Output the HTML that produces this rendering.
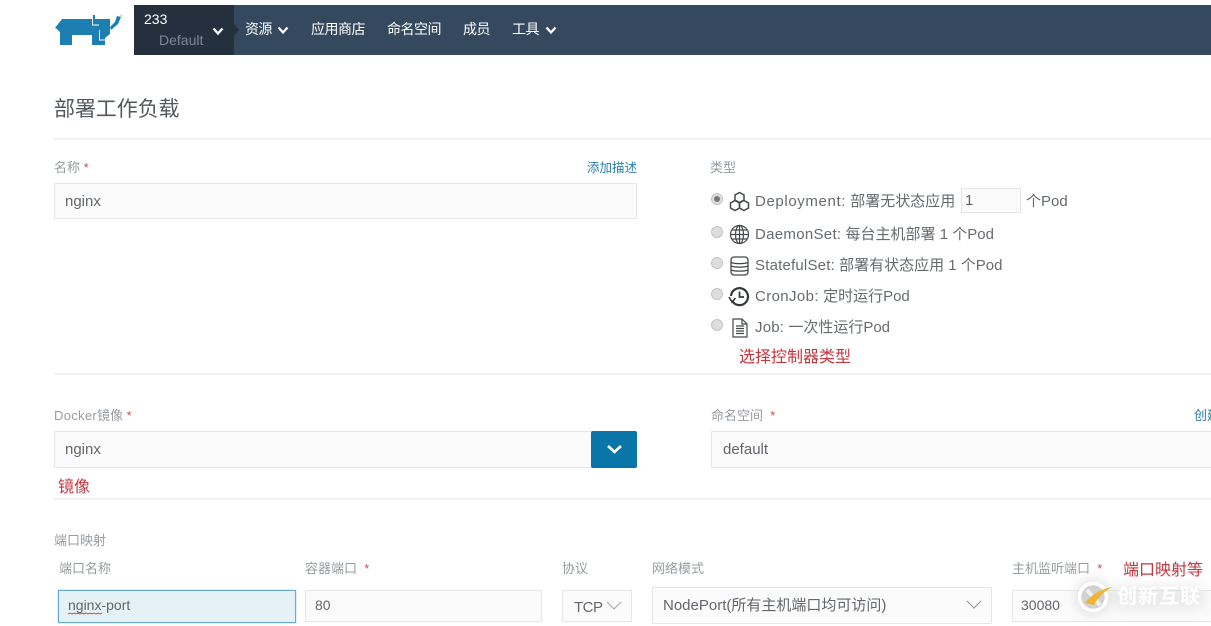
<!DOCTYPE html>
<html lang="zh"><head><meta charset="utf-8"><title>部署工作负载</title>
<style>
html,body{margin:0;padding:0;background:#fff}
body{position:relative;width:1211px;height:626px;overflow:hidden;font-family:"Liberation Sans","Noto Sans CJK SC",sans-serif;color:#555a60}
.a{position:absolute;white-space:nowrap}
.bar{position:absolute;background:#f1f1f1;height:2px}
.l{position:absolute;white-space:nowrap;font-size:13px;line-height:16px;color:#979ca1}
.l i{font-style:normal;color:#c0525c}
.inp{position:absolute;box-sizing:border-box;background:#fbfbfb;border:1px solid #e4e6e8;font-size:15px;color:#62666b;padding-left:10px;white-space:nowrap}
.nav{position:absolute;top:21px;font-size:14px;line-height:17px;color:#fff;white-space:nowrap}
.t{position:absolute;font-size:15px;line-height:18px;color:#676b70;white-space:nowrap}
.t b{font-weight:normal}
.r{position:absolute;left:711px;width:12px;height:12px;border-radius:50%;background:#dedede;border:1px solid #c4c4c4;box-sizing:border-box}
.red{position:absolute;font-size:16px;line-height:20px;color:#c2363e;white-space:nowrap}
svg{position:absolute;overflow:visible}
</style></head><body>

<div class="a" style="left:134px;top:5px;width:100px;height:50px;background:#24303e"></div>
<div class="a" style="left:234px;top:5px;width:977px;height:50px;background:#35495e"></div>
<svg style="left:234px;top:24px" width="6" height="12"><path d="M0 0L5 6L0 12Z" fill="#24303e"/></svg>

<svg style="left:54px;top:14px" width="68" height="34" viewBox="0 0 68 34">
<path d="M1 14L8 5H38V1H41V5H56V20L51 24V31H38V21H18V31H6V18L3 15Z" fill="#1d7fb1"/>
<path d="M56 13L61 8L63 2L67 3L64 10L57 16Z" fill="#1d7fb1"/>
<path d="M38.500 1V11H45M45.500 16V26H51" fill="none" stroke="#fff" stroke-width=".9"/>
<circle cx="67" cy="2" r="1.100" fill="none" stroke="#9cc" stroke-width=".6"/>
</svg>

<div class="a" style="left:144px;top:11px;font-size:14px;line-height:17px;color:#fff">233</div>
<div class="a" style="left:159px;top:32px;font-size:14px;line-height:17px;color:#7e8791">Default</div>
<svg style="left:212px;top:27px" width="12" height="9"><path d="M1.500 1.500L6 6.500L10.500 1.500" fill="none" stroke="#fff" stroke-width="2.400"/></svg>

<div class="nav" style="left:245px;letter-spacing:-.6px">资源</div>
<svg style="left:277px;top:26px" width="12" height="9"><path d="M1.500 1.500L6 6.500L10.500 1.500" fill="none" stroke="#fff" stroke-width="2.200"/></svg>
<div class="nav" style="left:311px;letter-spacing:-.5px">应用商店</div>
<div class="nav" style="left:387px;letter-spacing:-.5px">命名空间</div>
<div class="nav" style="left:463px;letter-spacing:-.5px">成员</div>
<div class="nav" style="left:512px;letter-spacing:-.5px">工具</div>
<svg style="left:545px;top:26px" width="12" height="9"><path d="M1.500 1.500L6 6.500L10.500 1.500" fill="none" stroke="#fff" stroke-width="2.200"/></svg>

<div class="a" style="left:54px;top:97px;font-size:21px;line-height:26px;letter-spacing:-.1px;color:#53585e">部署工作负载</div>
<div class="bar" style="left:54px;top:138px;width:1157px"></div>

<div class="l" style="left:54px;top:160px">名称 <i>*</i></div>
<div class="l" style="left:587px;top:160px;font-size:12.500px;color:#2d7ea8">添加描述</div>
<div class="inp" style="left:54px;top:183px;width:583px;height:36px;line-height:35px">nginx</div>

<div class="l" style="left:710px;top:160px">类型</div>

<div class="r" style="top:193px"></div>
<div class="a" style="left:714px;top:196px;width:6px;height:6px;border-radius:50%;background:#777"></div>
<svg style="left:729px;top:191px" width="21" height="21" viewBox="0 0 21 21" fill="none" stroke="#45494e" stroke-width="1.500">
<path d="M10.500 1.500L15 4V9L10.500 11.500L6 9V4Z"/><path d="M6 9.500L10.500 12V17L6 19.500L1.500 17V12Z"/><path d="M15 9.500L19.500 12V17L15 19.500L10.500 17V12Z"/></svg>
<div class="t" style="left:755px;top:193px"><b style="letter-spacing:.62px">Deployment:</b> 部署无状态应用</div>
<div class="inp" style="left:961px;top:188px;width:60px;height:25px;line-height:24px;padding-left:3px">1</div>
<div class="t" style="left:1026px;top:193px">个Pod</div>

<div class="r" style="top:226px"></div>
<svg style="left:729px;top:224px" width="21" height="21" viewBox="0 0 21 21" fill="none" stroke="#45494e" stroke-width="1.200">
<circle cx="10.500" cy="10.500" r="9"/><ellipse cx="10.500" cy="10.500" rx="4" ry="9"/><path d="M10.500 1.500V19.500M1.500 10.500H19.500M3 6H18M3 15H18"/></svg>
<div class="t" style="left:755px;top:226px"><b style="letter-spacing:.3px">DaemonSet:</b> 每台主机部署 1 个Pod</div>

<div class="r" style="top:257px"></div>
<svg style="left:730px;top:256px" width="20" height="20" viewBox="0 0 20 20" fill="none" stroke="#45494e" stroke-width="1.300">
<rect x="1" y="1" width="17" height="18" rx="3"/><path d="M1 6.500C5 8 14 8 18 6.500M1 10C5 11.500 14 11.500 18 10M1 14C5 15.500 14 15.500 18 14"/></svg>
<div class="t" style="left:755px;top:257px"><b style="letter-spacing:.2px">StatefulSet:</b> 部署有状态应用 1 个Pod</div>

<div class="r" style="top:288px"></div>
<svg style="left:729px;top:286px" width="21" height="21" viewBox="0 0 21 21" fill="none" stroke="#33373c" stroke-width="2.200">
<path d="M3.500 15.500A8.500 8.500 0 1 0 2 10"/><path d="M0 11L3 16L6.500 12" stroke-width="1.600"/><path d="M10.500 5.500V11H15" stroke-width="1.700"/></svg>
<div class="t" style="left:755px;top:288px"><b style="letter-spacing:.38px">CronJob:</b> 定时运行Pod</div>

<div class="r" style="top:319px"></div>
<svg style="left:732px;top:318px" width="16" height="20" viewBox="0 0 16 20" fill="none" stroke="#45494e" stroke-width="1.200">
<path d="M1 1H10L15 6V19H1Z"/><path d="M10 1V6H15M4 8H12M4 10.500H12M4 13H12M4 15.500H12"/></svg>
<div class="t" style="left:755px;top:319px"><b style="letter-spacing:.2px">Job:</b> 一次性运行Pod</div>

<div class="red" style="left:739px;top:348px">选择控制器类型</div>
<div class="bar" style="left:54px;top:373px;width:1157px"></div>

<div class="l" style="left:54px;top:408px"><span style="letter-spacing:.3px">Docker</span>镜像 <i>*</i></div>
<div class="inp" style="left:54px;top:431px;width:540px;height:37px;line-height:35px">nginx</div>
<div class="a" style="left:591px;top:431px;width:46px;height:37px;background:#0a75a8;border-radius:2px"></div>
<svg style="left:606px;top:444px" width="17" height="11"><path d="M2 2L8.500 8L15 2" fill="none" stroke="#fff" stroke-width="2.600"/></svg>

<div class="l" style="left:711px;top:408px">命名空间 &nbsp;<i>*</i></div>
<div class="l" style="left:1194px;top:408px;color:#2d7ea8">创建</div>
<div class="inp" style="left:711px;top:431px;width:510px;height:37px;line-height:35px;padding-left:11px">default</div>

<div class="red" style="left:58px;top:478px">镜像</div>
<div class="bar" style="left:54px;top:498px;width:1157px"></div>

<div class="l" style="left:54px;top:533px">端口映射</div>
<div class="l" style="left:59px;top:561px">端口名称</div>
<div class="l" style="left:305px;top:561px">容器端口 &nbsp;<i>*</i></div>
<div class="l" style="left:562px;top:561px">协议</div>
<div class="l" style="left:652px;top:561px">网络模式</div>
<div class="l" style="left:1012px;top:561px">主机监听端口 &nbsp;<i>*</i></div>
<div class="red" style="left:1123px;top:561px">端口映射等</div>

<div class="inp" style="left:58px;top:590px;width:238px;height:33px;line-height:29px;background:#e4f1f6;border:1px solid #6aa9cf;box-shadow:0 0 1px #6aa9cf;padding-left:9px;font-size:14px">nginx-port</div>
<svg style="left:68px;top:612px" width="36" height="3"><path d="M0 2L2 1L4 2L6 1L8 2L10 1L12 2L14 1L16 2L18 1L20 2L22 1L24 2L26 1L28 2L30 1L32 2L34 1" fill="none" stroke="#d8343e" stroke-width=".9"/></svg>
<div class="inp" style="left:305px;top:590px;width:237px;height:32px;line-height:29px;padding-left:9px;font-size:14px">80</div>
<div class="inp" style="left:562px;top:590px;width:70px;height:32px;line-height:33px;font-size:15px;padding-left:11px;letter-spacing:-.5px">TCP</div>
<svg style="left:606px;top:601px" width="16" height="10"><path d="M1 1L8 8L15 1" fill="none" stroke="#a5a9ad" stroke-width="1.100"/></svg>
<div class="inp" style="left:652px;top:587px;width:340px;height:37px;line-height:35px;padding-left:10px">NodePort(所有主机端口均可访问)</div>
<svg style="left:966px;top:600px" width="16" height="10"><path d="M1 1L8 8L15 1" fill="none" stroke="#8f9499" stroke-width="1.100"/></svg>
<div class="inp" style="left:1012px;top:590px;width:210px;height:32px;line-height:29px;padding-left:8px;font-size:14px">30080</div>

<div class="a" style="left:1110px;top:585px;width:96px;height:24px;background:#d9d9d9;opacity:.5;filter:blur(6px);border-radius:12px"></div>
<div class="a" style="left:1074px;top:578px;width:38px;height:38px;background:#d4d4d4;opacity:.55;filter:blur(5px);border-radius:50%"></div>
<svg style="left:1070px;top:575px" width="141" height="48" viewBox="0 0 141 48">
<circle cx="23" cy="22" r="12" fill="#d2d2d2"/>
<circle cx="23" cy="22" r="13.500" fill="none" stroke="#fff" stroke-width="3.500"/>
<path d="M17 15L30 30" stroke="#f1f1f1" stroke-width="4"/>
<path d="M15 28C22 19 31 14 42 12C34 17 28 22 24 30Z" fill="#f2b431"/>
</svg>
<div class="a" style="left:1117px;top:586px;font-size:20px;line-height:22px;letter-spacing:1px;color:#fff;font-weight:bold">创新互联</div>
</body></html>
